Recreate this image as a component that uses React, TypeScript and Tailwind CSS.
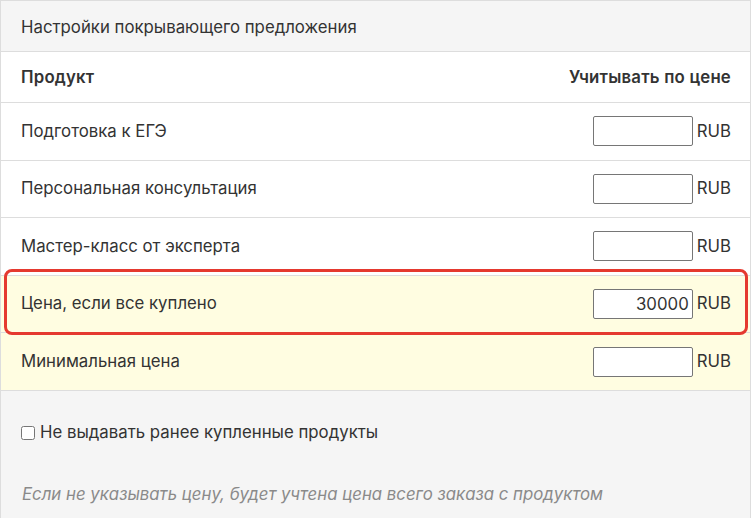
import React from "react";

const rows = [
  { name: "Подготовка к ЕГЭ", value: "", hl: false },
  { name: "Персональная консультация", value: "", hl: false },
  { name: "Мастер-класс от эксперта", value: "", hl: false },
  { name: "Цена, если все куплено", value: "30000", hl: true },
  { name: "Минимальная цена", value: "", hl: true },
];

function PriceRow({ name, value, hl }: { name: string; value: string; hl: boolean }) {
  return (
    <div
      className={`flex h-[57.6px] items-center justify-between border-b border-[#dddddd] pl-5 pr-[19px] ${
        hl ? "bg-[#fffde1]" : "bg-white"
      }`}
    >
      <span>{name}</span>
      <div className="flex items-center">
        <input
          type="text"
          defaultValue={value}
          className="h-[30px] w-[100px] rounded-[2px] border border-[#767676] bg-white px-[3px] text-right text-[16.8px] text-[#333] outline-none"
        />
        <span className="ml-[4px]">RUB</span>
      </div>
    </div>
  );
}

export default function App() {
  return (
    <div
      className="relative h-[518px] w-[751px] overflow-hidden bg-white text-[16.8px] text-[#333333]"
      style={{ fontFamily: "Inter, 'Noto Sans', sans-serif" }}
    >
      <div className="flex h-full flex-col border-x border-t border-[#dddddd]">
        <div className="flex h-[51px] items-center border-b border-[#dddddd] bg-[#f5f5f5] px-5 pt-[3px]">
          Настройки покрывающего предложения
        </div>
        <div className="flex h-[51px] items-center justify-between border-b border-[#dddddd] pl-5 pr-[19px] pt-[1px] font-semibold tracking-[0.2px]">
          <span>Продукт</span>
          <span>Учитывать по цене</span>
        </div>
        {rows.map((r) => (
          <PriceRow key={r.name} {...r} />
        ))}
        <div className="flex-1 bg-[#f5f5f5] pl-[20px] pt-[29px]">
          <label className="flex items-center">
            <input type="checkbox" className="m-0 h-[14px] w-[14px]" />
            <span className="ml-[5px]">Не выдавать ранее купленные продукты</span>
          </label>
          <p className="mt-[37px] pl-[1px] italic text-[#8a8a8a]">
            Если не указывать цену, будет учтена цена всего заказа с продуктом
          </p>
        </div>
      </div>
      <div className="pointer-events-none absolute left-[4px] top-[269px] h-[66px] w-[744px] rounded-[8px] border-[3px] border-[#e5392f]" />
    </div>
  );
}
